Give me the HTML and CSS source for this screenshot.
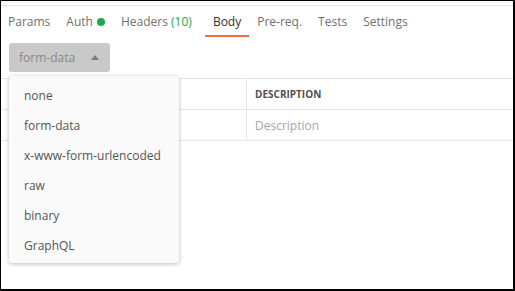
FILE: index.html
```html
<!DOCTYPE html>
<html>
<head>
  <meta charset="utf-8">
  <link rel="stylesheet" href="styles.css">
</head>
<body>
  <div class="frame">
    <div class="topline"></div>
    <div class="tabs">
      <span class="tab">Params</span>
      <span class="tab">Auth <i class="dot"></i></span>
      <span class="tab">Headers <em class="count">(10)</em></span>
      <span class="tab active">Body</span>
      <span class="tab">Pre-req.</span>
      <span class="tab">Tests</span>
      <span class="tab">Settings</span>
    </div>

    <div class="toolbar">
      <button class="mode-btn">form-data <span class="caret"></span></button>
    </div>

    <div class="params">
      <div class="row head">
        <div class="cell key"></div>
        <div class="cell value">VALUE</div>
        <div class="cell desc">DESCRIPTION</div>
      </div>
      <div class="row">
        <div class="cell key"></div>
        <div class="cell value ph">Value</div>
        <div class="cell desc ph">Description</div>
      </div>

      <ul class="menu">
        <li>none</li>
        <li>form-data</li>
        <li>x-www-form-urlencoded</li>
        <li>raw</li>
        <li>binary</li>
        <li>GraphQL</li>
      </ul>
    </div>
  </div>
</body>
</html>
```

FILE: styles.css
```css
* {
    box-sizing: border-box;
}

html, body {
    margin: 0;
    padding: 0;
    background: #fff;
}

body {
    font-family: "Open Sans", "Noto Sans", sans-serif;
    font-size: 12px;
    color: #707070;
}

.frame {
    width: 515px;
    height: 291px;
    border: 1px solid #000;
    border-right-width: 2px;
    border-bottom-width: 2px;
    overflow: hidden;
}

.topline {
    height: 5px;
    border-bottom: 1px solid #e6e6e6;
}

.tabs {
    display: flex;
    height: 31px;
    margin-left: -1px;
}

.tab {
    display: flex;
    align-items: center;
    padding: 2px 8px 0;
    line-height: 27px;
    border-bottom: 2px solid transparent;
    white-space: pre;
}

.tab.active {
    margin-left: 5px;
    color: #303030;
    border-bottom-color: #f26b3a;
}

.dot {
    display: inline-block;
    width: 8px;
    height: 8px;
    border-radius: 50%;
    background: #1ba94c;
    margin-left: 1px;
}

.count {
    font-style: normal;
    color: #26a05a;
}

.toolbar {
    padding: 6px 0 0 8px;
}

.mode-btn {
    display: flex;
    align-items: center;
    width: 101px;
    height: 29px;
    padding: 0 0 0 10px;
    border: none;
    border-radius: 3px;
    background: #c9c9c9;
    color: #888;
    font-family: inherit;
    font-size: 12px;
}

.caret {
    width: 0;
    height: 0;
    margin-left: 16px;
    border-left: 4px solid transparent;
    border-right: 4px solid transparent;
    border-bottom: 5px solid #7d7d7d;
}

.params {
    position: relative;
    margin-top: 6px;
    border-top: 1px solid #e6e6e6;
}

.row {
    display: flex;
    height: 31px;
    border-bottom: 1px solid #e6e6e6;
}

.cell {
    display: flex;
    align-items: center;
    padding: 0 8px;
    border-right: 1px solid #e6e6e6;
}

.cell.key {
    width: 134px;
}

.cell.value {
    width: 112px;
}

.cell.desc {
    flex: 1;
    border-right: none;
}

.head .cell {
    font-size: 10px;
    font-weight: 700;
    color: #505050;
}

.ph {
    color: #a6a6a6;
}

.menu {
    position: absolute;
    left: 8px;
    top: -3px;
    width: 170px;
    margin: 0;
    padding: 5px 0 2px;
    list-style: none;
    background: #fafafa;
    border-radius: 3px;
    box-shadow: 0 1px 4px rgba(0, 0, 0, 0.28);
}

.menu li {
    height: 30px;
    line-height: 30px;
    padding-left: 15px;
    color: #555;
}
```
